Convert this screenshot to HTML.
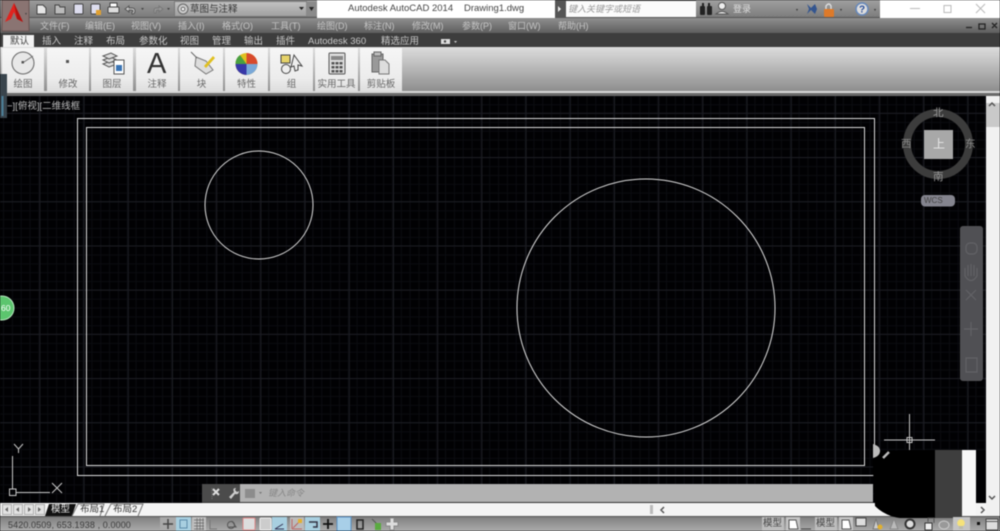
<!DOCTYPE html>
<html><head><meta charset="utf-8"><style>
html,body{margin:0;padding:0;background:#000}
#p{position:relative;width:1000px;height:531px;overflow:hidden;font-family:"Liberation Sans","Noto Sans CJK SC",sans-serif;background:#000;filter:blur(.45px)}
#p div,#p span.t{position:absolute}
.t{white-space:nowrap}
.m{top:19px;font-size:9px;color:#c4c4c4;line-height:14px}
.tb{top:35px;font-size:9.5px;color:#c8c8c8;line-height:13px}
.pn{top:48px;height:43px;background:linear-gradient(#f6f6f6,#ececec 70%,#dedede)}
.l{top:78px;font-size:9.5px;color:#666;line-height:13px;text-align:center}
svg{position:absolute;left:0;top:0}
</style></head><body><div id="p">
<div style="left:0;top:0;width:1000px;height:18px;background:#fff"></div>
<div style="left:0;top:0;width:317px;height:18px;background:linear-gradient(#9a9a9a,#7c7c7c);border-bottom:1px solid #555;box-sizing:border-box"></div>
<div style="left:175px;top:2px;width:131px;height:14px;background:linear-gradient(#c2c2c2,#a0a0a0);box-shadow:0 0 0 1px #777"></div>
<span class="t" style="left:190px;top:3px;font-size:9.5px;line-height:13px;color:#333">草图与注释</span>
<span class="t" style="left:348px;top:2px;font-size:9.5px;line-height:14px;color:#444">Autodesk AutoCAD 2014</span>
<span class="t" style="left:464px;top:2px;font-size:9.5px;line-height:14px;color:#444">Drawing1.dwg</span>
<div style="left:555px;top:0;width:141px;height:18px;background:#555"></div>
<div style="left:566px;top:1px;width:130px;height:16px;background:#fbfbfb"></div>
<span class="t" style="left:568px;top:3px;font-size:9px;line-height:13px;color:#999;font-style:italic">键入关键字或短语</span>
<div style="left:696px;top:0;width:184px;height:18px;background:linear-gradient(#a0a0a0,#7c7c7c);border-bottom:1px solid #555;box-sizing:border-box"></div>
<span class="t" style="left:733px;top:3px;font-size:9px;line-height:13px;color:#ddd">登录</span>

<div style="left:0;top:18px;width:1000px;height:16px;background:linear-gradient(#8f8f8f,#5b5b5b)"></div>
<span class="t m" style="left:40px">文件(F)</span><span class="t m" style="left:85px">编辑(E)</span><span class="t m" style="left:131px">视图(V)</span><span class="t m" style="left:178px">插入(I)</span><span class="t m" style="left:222px">格式(O)</span><span class="t m" style="left:271px">工具(T)</span><span class="t m" style="left:317px">绘图(D)</span><span class="t m" style="left:364px">标注(N)</span><span class="t m" style="left:412px">修改(M)</span><span class="t m" style="left:462px">参数(P)</span><span class="t m" style="left:508px">窗口(W)</span><span class="t m" style="left:558px">帮助(H)</span>

<div style="left:0;top:33px;width:1000px;height:15px;background:#3d3d3d"></div>
<div style="left:3px;top:35px;width:31px;height:13px;background:#f2f2f2"></div>
<span class="t tb" style="left:10px;color:#444">默认</span><span class="t tb" style="left:42px">插入</span><span class="t tb" style="left:74px">注释</span><span class="t tb" style="left:106px">布局</span><span class="t tb" style="left:139px">参数化</span><span class="t tb" style="left:180px">视图</span><span class="t tb" style="left:212px">管理</span><span class="t tb" style="left:244px">输出</span><span class="t tb" style="left:276px">插件</span><span class="t tb" style="left:308px">Autodesk 360</span><span class="t tb" style="left:381px">精选应用</span>

<div style="left:0;top:47px;width:1000px;height:44px;background:linear-gradient(#dcdcdc,#c2c2c2 35%,#8e8e8e)"></div>
<div style="left:0;top:91px;width:1000px;height:2px;background:#d8d8d8"></div>
<div style="left:0;top:93px;width:1000px;height:3px;background:#696969"></div>
<div class="pn" style="left:2px;width:42px"></div><div class="pn" style="left:47px;width:42px"></div><div class="pn" style="left:91px;width:42px"></div><div class="pn" style="left:136px;width:42px"></div><div class="pn" style="left:180px;width:43px"></div><div class="pn" style="left:225px;width:43px"></div><div class="pn" style="left:270px;width:43px"></div><div class="pn" style="left:315px;width:43px"></div><div class="pn" style="left:360px;width:42px"></div>
<span class="t l" style="left:2px;width:42px">绘图</span><span class="t l" style="left:47px;width:42px">修改</span><span class="t l" style="left:91px;width:42px">图层</span><span class="t l" style="left:136px;width:42px">注释</span><span class="t l" style="left:180px;width:43px">块</span><span class="t l" style="left:225px;width:43px">特性</span><span class="t l" style="left:270px;width:43px">组</span><span class="t l" style="left:315px;width:43px">实用工具</span><span class="t l" style="left:360px;width:42px">剪贴板</span>
<span class="t" style="left:147px;top:49px;font-size:29px;line-height:30px;color:#333">A</span>

<!-- canvas -->
<svg width="1000" height="531" viewBox="0 0 1000 531">
<defs>
<pattern id="g1" x="3" y="7" width="8.84" height="8.84" patternUnits="userSpaceOnUse"><path d="M0 .5H8.84M.5 0V8.84" stroke="#0b0c10" stroke-width="1" fill="none"/></pattern>
<pattern id="g2" x="39.4" y="24.4" width="44.2" height="44.2" patternUnits="userSpaceOnUse"><path d="M0 .5H44.2M.5 0V44.2" stroke="#1c1d23" stroke-width="1" fill="none"/></pattern>
<linearGradient id="sb" x1="0" y1="0" x2="0" y2="1"><stop offset="0" stop-color="#7d7d7d"/><stop offset="1" stop-color="#ababab"/></linearGradient>
</defs>
<rect x="0" y="96" width="986" height="407" fill="#010103"/>
<rect x="0" y="96" width="986" height="407" fill="url(#g1)"/>
<rect x="0" y="96" width="986" height="407" fill="url(#g2)"/>
<g fill="none" stroke="#dcdcdc" stroke-width="1">
<rect x="77.5" y="118.5" width="797" height="357"/>
<rect x="86.5" y="127.5" width="778" height="338"/>
<circle cx="259" cy="205" r="54"/>
<circle cx="646" cy="308" r="129"/>
</g>
<!-- UCS -->
<g fill="none" stroke="#c8c8c8" stroke-width="1">
<path d="M12.5 456V489M16 492.5H50"/><rect x="9.5" y="489" width="6.5" height="6.5"/>
<path d="M52 483L62 493M62 483L52 493M14 444L18.500 449L23 444M18.500 449V453"/>
</g>
<!-- crosshair -->
<g stroke="#c4c4c4" stroke-width="1" fill="none"><path d="M884 440H935M909.500 414V452"/><rect x="907" y="437.500" width="5" height="5"/></g>
<!-- viewcube -->
<circle cx="938" cy="144" r="31" fill="none" stroke="#3c3c3c" stroke-width="8"/>
<rect x="924" y="130" width="29" height="29" fill="#a8a8a8"/>
<rect x="921" y="195" width="34" height="11.500" rx="4" fill="#84848e"/>
<!-- navbar -->
<rect x="960" y="226" width="23" height="155" rx="3" fill="#505054"/>
<g fill="none" stroke="#626266" stroke-width="1.2"><rect x="966" y="243" width="11" height="11" rx="4"/><path d="M965 276V268M968 276V265M971 276V264M974 276V265M977 276V268M965 276Q971 285 977 276M966 290L976 300M976 290L966 300M971 322V336M964 329H978M966 358H977V372H966Z"/></g>
<!-- left widgets -->
<rect x="0" y="74" width="7" height="44" fill="#39444c"/><rect x="1.500" y="96" width="2" height="20" fill="#4d7f98"/>
<circle cx="2" cy="308" r="12" fill="#5cc56e" stroke="#b8e8c0" stroke-width="1"/>

<!-- logo -->
<rect x="2" y="0" width="27" height="31" fill="#8a7472" stroke="#6a5553"/>
<path d="M14 3L5 22L11 19L14 12L17 19L23 22Z" fill="#e0241f"/><path d="M14 3L17 19L23 22Z" fill="#b0120f"/>
<path d="M25 13l2 0-1 2z" fill="#444"/>
<!-- qat -->
<g stroke="#444" stroke-width="1" fill="#e6e6e6">
<path d="M37 5h6l3 3v6h-9z"/>
<path d="M55 5h4l1 2h5v7h-10z" fill="#bbb"/>
<rect x="74" y="4" width="9" height="10" rx="1" fill="#dde"/>
<rect x="91" y="4" width="9" height="10" rx="1" fill="#dde"/>
<rect x="108" y="7" width="11" height="6" rx="1" fill="#ddd"/><rect x="110" y="3" width="7" height="4" fill="#fff"/>
</g>
<rect x="96" y="10" width="5" height="5" fill="#e0a030"/>
<path d="M125 9l4-3v2h3q3 0 3 3t-3 3v-2q1 0 1-1t-2-1h-2v2z" fill="#ccc" stroke="#555"/>
<path d="M163 9l-4-3v2h-3q-2 0-2 3t2 2v-1q0-2 2-2h1v2z" fill="#999" stroke="#777"/>
<path d="M141 8l3 0-1.500 2zM167 8l3 0-1.500 2z" fill="#444"/>
<circle cx="183" cy="9" r="5" fill="#ccc" stroke="#666"/><circle cx="183" cy="9" r="1.800" fill="#fff" stroke="#666"/>
<path d="M299 7l5 0-2.500 3z" fill="#222"/><rect x="306" y="2" width="11" height="14" fill="#8a8a8a"/><path d="M309 7h5l-2.500 4z" fill="#222"/>
<path d="M558 6l3 3-3 3z" fill="#eee"/>
<!-- tab icon -->
<rect x="441" y="39" width="9" height="5" fill="#ddd"/><circle cx="445" cy="41.500" r="1.200" fill="#444"/><path d="M454 41h3l-1.500 2z" fill="#ccc"/>
<!-- right info icons -->
<g fill="#222"><rect x="700" y="6" width="5" height="9" rx="1"/><rect x="707" y="6" width="5" height="9" rx="1"/><rect x="702" y="3" width="2" height="4"/><rect x="708" y="3" width="2" height="4"/></g>
<circle cx="722" cy="6" r="3.500" fill="#eee" stroke="#555"/><path d="M716 14q6-5 12 0z" fill="#eee" stroke="#555"/>
<path d="M796 9h2l-1 2zM840 9h2l-1 2zM874 9h2l-1 2z" fill="#333"/>
<path d="M807 4l4 4 4-4 2 5-2 5-4-4-4 4 2-5z" fill="#33558f"/>
<rect x="824" y="9" width="10" height="8" rx="1" fill="#dd7a2a"/><path d="M826 9V6q3-4 5 0v3" fill="none" stroke="#ddd" stroke-width="1.400"/>
<circle cx="862" cy="9" r="6" fill="#ddd" stroke="#6688bb" stroke-width="1.500"/><text x="862" y="12.500" font-size="10" font-weight="700" fill="#2a4f9a" text-anchor="middle" font-family="Liberation Sans">?</text>
<g stroke="#bbb" fill="none" stroke-width="1"><path d="M910 8.500H920M944 5.500h7v7h-7zM976 4l9 9M985 4l-9 9"/></g>
<g stroke="#222" fill="none" stroke-width="1.300"><path d="M966 27.500H972M979 24h6v5h-6zM992 23l5 5M997 23l-5 5"/></g>
<!-- ribbon icons -->
<circle cx="23" cy="63" r="11" fill="#e8e8e8" stroke="#666" stroke-width="1"/><path d="M24 62L33 56" stroke="#777"/><rect x="21.500" y="61" width="2.500" height="2.500" fill="#555"/>
<rect x="66" y="60" width="3" height="3" fill="#555"/>
<g fill="#ddd" stroke="#555"><path d="M103 64l8-3 6 3-8 3z"/><path d="M103 60l8-3 6 3-8 3z"/><path d="M103 56l8-3 6 3-8 3z"/></g>
<rect x="114" y="60" width="10" height="14" fill="#fff" stroke="#555"/><rect x="116" y="65" width="6" height="6" fill="#3a74b4"/>
<path d="M196 57l10 4 7 9-7 4-11-8z" fill="#ddd" stroke="#777"/><path d="M204 66l9-10 2 2-9 10z" fill="#e0c020"/><path d="M191 52l6 6" stroke="#666"/>
<g><circle cx="246.500" cy="64" r="11" fill="#e0c020"/>
<path d="M246.500 64L246.500 53A11 11 0 0 1 257.500 64Z" fill="#d84a2c"/><path d="M246.500 64L257.500 64A11 11 0 0 1 246.500 75Z" fill="#7aa8d8"/><path d="M246.500 64L246.500 75A11 11 0 0 1 235.500 64Z" fill="#3838a8"/><path d="M246.500 64L235.500 64A11 11 0 0 1 240 55Z" fill="#4aa040"/></g>
<rect x="281" y="55" width="9" height="8" fill="#e6d36a" stroke="#444"/><circle cx="286" cy="69" r="4.500" fill="#eee" stroke="#444"/><path d="M294 55l8 11-4-1 0 5-3 1-1-5-3 1z" fill="#eee" stroke="#444"/>
<rect x="329" y="53" width="16" height="21" rx="1" fill="#ddd" stroke="#555"/><rect x="331" y="56" width="12" height="4" fill="#888"/><g fill="#555"><rect x="331.500" y="62" width="3" height="2.500"/><rect x="335.500" y="62" width="3" height="2.500"/><rect x="339.500" y="62" width="3" height="2.500"/><rect x="331.500" y="66" width="3" height="2.500"/><rect x="335.500" y="66" width="3" height="2.500"/><rect x="339.500" y="66" width="3" height="2.500"/><rect x="331.500" y="70" width="3" height="2.500"/><rect x="335.500" y="70" width="3" height="2.500"/><rect x="339.500" y="70" width="3" height="2.500"/></g>
<rect x="372" y="54" width="11" height="18" fill="#999" stroke="#666"/><rect x="374" y="52" width="7" height="4" fill="#bbb" stroke="#666"/><path d="M379 60h6l4 4v10h-10z" fill="#ddd" stroke="#777"/>

<!-- bottom bars -->
<rect x="202" y="484" width="38" height="18" fill="#4b4b4b"/>
<rect x="240" y="484" width="633" height="18" fill="#b2b2b2"/>
<rect x="202" y="502" width="671" height="1" fill="#333"/>
<rect x="0" y="503" width="986" height="13" fill="#f4f4f4"/>
<rect x="986" y="96" width="14" height="420" fill="#f1f1f1"/>
<rect x="986" y="103" width="14" height="24" fill="#c9c9c9"/>
<rect x="0" y="516" width="1000" height="15" fill="url(#sb)"/>
<rect x="0" y="516" width="1000" height="1" fill="#555"/>
<!-- blob -->
<path d="M873 452q10 0 32-2H935V518H900Q885 516 875 506L873 470Z" fill="#000"/>
<path d="M873 444q7 2 7 7t-7 7z" fill="#bbb"/>
<path d="M883 458l6-6" stroke="#bbb" stroke-width="2.500"/>
<rect x="935" y="450" width="27" height="68" fill="#3e3e3e"/>
<rect x="962" y="450" width="14" height="66" fill="#f7f7f7"/>
<rect x="976" y="450" width="10" height="53" fill="#010103"/>
<rect x="976" y="503" width="10" height="13" fill="#f4f4f4"/>
<!-- scroll arrows -->
<g fill="none" stroke="#555" stroke-width="1.500"><path d="M989 106l3-3 3 3M989 496l3 3 3-3M981 507l3 3-3 3M664 507l-3 3 3 3"/></g>
<rect x="650" y="505" width="3" height="9" fill="#bbb"/>
<!-- tab nav -->
<g fill="#e2e2e2" stroke="#aaa"><rect x="2.500" y="504.500" width="9" height="10"/><rect x="13.500" y="504.500" width="9" height="10"/><rect x="24.500" y="504.500" width="9" height="10"/><rect x="35.500" y="504.500" width="9" height="10"/></g>
<path d="M8 507l-3 2.500 3 2.500zM19 507l-3 2.500 3 2.500zM28 507l3 2.500-3 2.500zM38 507l3 2.500-3 2.500z" fill="#666"/>
<path d="M45 516l4-12h27l-4 12z" fill="#111"/>
<path d="M72 516l6-12h26l-4 12M105 516l6-12h32l-5 12" fill="none" stroke="#777"/>
<!-- cmd bar icons -->
<path d="M212 488v11" stroke="#777" stroke-dasharray="1 1"/>
<path d="M213 488l6 6M219 488l-6 6" stroke="#ddd" stroke-width="2" transform="translate(0,1)"/>
<path d="M229 497l5-5q-2-4 2-4l-1 2 2 2 2-1q0 4-4 3l-4 5z" fill="#ccc"/>
<rect x="245" y="489" width="10" height="9" fill="#8c8c8c"/><path d="M259 492h3l-1.500 2z" fill="#777"/>
<!-- status icons -->
<rect x="160" y="517" width="16" height="14" fill="#a8a8a8"/><path d="M168 519v10M163 524h10" stroke="#444" stroke-width="1.500"/>
<rect x="176" y="517" width="15" height="14" fill="#a8cfe0"/><rect x="180" y="520" width="7" height="8" fill="none" stroke="#5c8caa"/>
<rect x="192" y="517" width="14" height="14" fill="#c0c0c0"/><path d="M194 520H204M194 523H204M194 526H204M194 529H204M197 518V530M200 518V530M203 518V530" stroke="#666" stroke-width=".7"/>
<path d="M210 520v9h7" stroke="#777" fill="none"/>
<circle cx="231" cy="525" r="3.500" fill="none" stroke="#555"/><path d="M232 521l4 6h-7" stroke="#555" fill="none"/>
<rect x="243" y="518" width="12" height="12" rx="1" fill="#ddd" stroke="#d88"/>
<rect x="260" y="518" width="11" height="12" rx="1" fill="#ccc" stroke="#eee"/>
<rect x="272" y="517" width="15" height="14" fill="#a8cfe0"/><path d="M275 529l8-5M275 529h9" stroke="#335" fill="none"/>
<rect x="290" y="517" width="14" height="14" fill="#bbb"/><path d="M292 529v-10M292 529h10M293 528l7-7" stroke="#b66" fill="none"/><rect x="298" y="519" width="4" height="4" fill="#e2b030"/>
<rect x="305" y="517" width="15" height="14" fill="#a8cfe0"/><path d="M309 522h8v5h-4" stroke="#334" fill="none" stroke-width="1.500"/>
<path d="M328 519v10M323 524h10" stroke="#111" stroke-width="1.800"/>
<rect x="337" y="517" width="14" height="14" fill="#a8cfe8" stroke="#5a8fc0"/>
<rect x="357" y="520" width="6" height="9" fill="none" stroke="#222" stroke-width="1.500"/>
<path d="M372 519l5 5" stroke="#555"/><rect x="375" y="523" width="6" height="7" fill="#5aaa40"/>
<path d="M390 518h4v4h4v4h-4v4h-4v-4h-4v-4h4z" fill="#ddd" stroke="#888"/>
<rect x="762" y="517" width="22" height="14" fill="#bdbdbd"/><rect x="786" y="517" width="14" height="14" fill="#c4c4c4"/><path d="M789 520l7 0 2 9h-9z" fill="#fff" stroke="#555"/>
<path d="M801 529h10" stroke="#444"/>
<rect x="815" y="517" width="22" height="14" fill="#bdbdbd"/><rect x="839" y="517" width="14" height="14" fill="#c4c4c4"/><path d="M842 520h7l2 9h-9z" fill="#fff" stroke="#555"/>
<rect x="856" y="518" width="10" height="8" fill="#ddd" stroke="#444"/>
<path d="M873 529l3-10 3 10z" fill="#ccc" stroke="#777"/><circle cx="880" cy="527" r="2.500" fill="#e0b030"/>
<path d="M890 529l4-10 4 10z" fill="#bbb" stroke="#888"/>
<circle cx="910" cy="524" r="4.500" fill="#ddd" stroke="#333" stroke-width="2"/>
<rect x="925" y="523" width="7" height="7" fill="#eee" stroke="#333"/><path d="M928 522v-4h6v5" fill="none" stroke="#555"/>
<ellipse cx="944" cy="525" rx="5" ry="4" fill="#999" stroke="#ccc"/>
<rect x="953" y="517" width="17" height="14" fill="#c4c4c4"/><circle cx="961" cy="523" r="3.800" fill="#f5e27a"/><rect x="959" y="526" width="4" height="3" fill="#bba"/>
<rect x="977" y="522" width="3" height="3" fill="#111"/>
<rect x="986" y="519" width="12" height="11" fill="#ddd" stroke="#444"/><path d="M986 521.500h12" stroke="#555"/>
</svg>

<!-- overlay text -->
<span class="t" style="left:7px;top:100px;font-size:9.5px;line-height:13px;color:#bbb">−][俯视][二维线框</span>
<span class="t" style="left:933px;top:106px;font-size:10.5px;line-height:14px;color:#999">北</span>
<span class="t" style="left:933px;top:170px;font-size:10.5px;line-height:14px;color:#999">南</span>
<span class="t" style="left:901px;top:137px;font-size:10.5px;line-height:14px;color:#888">西</span>
<span class="t" style="left:965px;top:137px;font-size:10.5px;line-height:14px;color:#888">东</span>
<span class="t" style="left:933px;top:137px;font-size:12px;line-height:14px;color:#e8e8e8">上</span>
<span class="t" style="left:924px;top:195px;font-size:8px;line-height:11px;color:#444">WCS</span>
<span class="t" style="left:1px;top:302px;font-size:8.5px;line-height:12px;color:#fff">60</span>
<span class="t" style="left:268px;top:487px;font-size:9px;line-height:12px;color:#888;font-style:italic">键入命令</span>
<span class="t" style="left:51px;top:504px;font-size:9.5px;line-height:12px;color:#eee">模型</span>
<span class="t" style="left:80px;top:504px;font-size:9.5px;line-height:12px;color:#333">布局1</span>
<span class="t" style="left:113px;top:504px;font-size:9.5px;line-height:12px;color:#333">布局2</span>
<span class="t" style="left:8px;top:519px;font-size:9px;line-height:12px;color:#3c3c3c;letter-spacing:.1px">5420.0509, 653.1938 , 0.0000</span>
<span class="t" style="left:763px;top:518px;font-size:9.5px;line-height:12px;color:#444">模型</span>
<span class="t" style="left:816px;top:518px;font-size:9.5px;line-height:12px;color:#444">模型</span>
</div></body></html>
